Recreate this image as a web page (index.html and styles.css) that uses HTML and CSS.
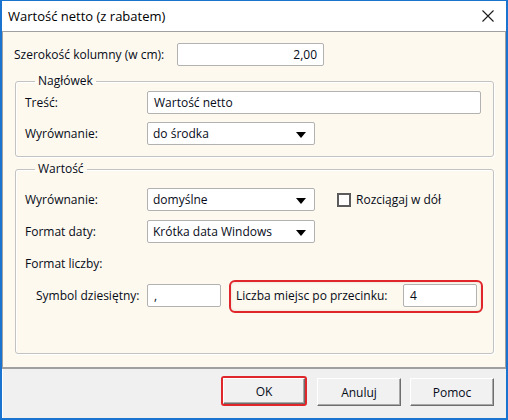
FILE: index.html
```html
<!DOCTYPE html>
<html lang="pl">
<head>
<meta charset="utf-8">
<title>Wartość netto (z rabatem)</title>
<link rel="stylesheet" href="styles.css">
</head>
<body>
<div class="window">
  <div class="titlebar">
    <span class="title">Wartość netto (z rabatem)</span>
    <span class="close"><svg width="12" height="12" viewBox="0 0 12 12"><path d="M0.5 0.5 L11.5 11.5 M11.5 0.5 L0.5 11.5" stroke="#1a1a1a" stroke-width="1.1" fill="none"/></svg></span>
  </div>
  <div class="panel">
    <div class="row top-row">
      <span class="label w-top">Szerokość kolumny (w cm):</span>
      <span class="field num">2,00</span>
    </div>
    <fieldset class="group g1">
      <legend>Nagłówek</legend>
      <div class="row">
        <span class="label w-lab">Treść:</span>
        <span class="field wide">Wartość netto</span>
      </div>
      <div class="row">
        <span class="label w-lab">Wyrównanie:</span>
        <span class="field select">do środka<i class="arrow"></i></span>
      </div>
    </fieldset>
    <fieldset class="group g2">
      <legend>Wartość</legend>
      <div class="row">
        <span class="label w-lab">Wyrównanie:</span>
        <span class="field select">domyślne<i class="arrow"></i></span>
        <span class="check"><i class="box"></i>Rozciągaj w dół</span>
      </div>
      <div class="row">
        <span class="label w-lab">Format daty:</span>
        <span class="field select">Krótka data Windows<i class="arrow"></i></span>
      </div>
      <div class="row">
        <span class="label">Format liczby:</span>
      </div>
      <div class="row sub">
        <span class="label w-sym">Symbol dziesiętny:</span>
        <span class="field small">,</span>
        <div class="highlight">
          <span class="label w-dec">Liczba miejsc po przecinku:</span>
          <span class="field small">4</span>
        </div>
      </div>
    </fieldset>
  </div>
  <div class="buttons">
    <div class="ring"><button class="btn">OK</button></div>
    <button class="btn">Anuluj</button>
    <button class="btn">Pomoc</button>
  </div>
</div>
</body>
</html>
```
FILE: styles.css
```css
* { box-sizing: border-box; }
html, body { margin: 0; padding: 0; background: #fff; }
body {
  width: 508px;
  height: 420px;
  font-family: "Open Sans", "Noto Sans", sans-serif;
  font-size: 12px;
  color: #060b18;
  overflow: hidden;
}
.window {
  width: 508px;
  height: 420px;
  border-left: 2px solid #1a73cf;
  border-right: 2px solid #1a73cf;
  border-bottom: 2px solid #1a73cf;
  border-top: 1px solid #1a73cf;
  display: flex;
  flex-direction: column;
  background: #f0f0f0;
}
.titlebar {
  height: 30px;
  background: #fff;
  display: flex;
  align-items: center;
  justify-content: space-between;
  padding: 0 12px 0 6px;
  flex: none;
}
.title { font-size: 13px; color: #000; margin-top: -1px; }
.close { display: flex; width: 12px; height: 12px; }
.panel {
  height: 338px;
  flex: none;
  background: #fdf9ee;
  border: 1px solid #a0a0a0;
  border-bottom: 2px solid #a0a0a0;
  padding: 11px 11px 0 11px;
}
.row {
  display: flex;
  align-items: center;
  height: 23px;
}
.label { white-space: nowrap; flex: none; }
.w-top { width: 163px; }
.w-lab { width: 122px; }
.w-sym { width: 111px; }
.w-dec { width: 167px; }
.field {
  height: 23px;
  background: #fff;
  border: 1px solid #b2b2b2;
  border-radius: 2px;
  display: flex;
  align-items: center;
  padding: 0 6px;
  white-space: nowrap;
  flex: none;
}
.num { width: 147px; justify-content: flex-end; }
.wide { width: 334px; }
.select { width: 168px; position: relative; padding-left: 5px; }
.small { width: 74px; }
.arrow {
  position: absolute;
  right: 8px;
  top: 9px;
  width: 0;
  height: 0;
  border-left: 5px solid transparent;
  border-right: 5px solid transparent;
  border-top: 6px solid #000;
}
.group {
  margin: 0;
  margin-left: 1px;
  width: 479px;
  border: 1px solid #c2c2c2;
  border-radius: 3px;
  box-shadow: inset 1px 1px 0 #fff, 1px 1px 0 #fff;
  padding: 0 0 0 9px;
}
.group legend {
  padding: 0 3px;
  margin-left: 10px;
  line-height: 14px;
  height: 14px;
}
.g1 { margin-top: 8px; padding-top: 3px; padding-bottom: 11px; }
.g1 .row + .row { margin-top: 8px; }
.g2 { margin-top: 5px; padding-top: 12px; height: 192px; }
.g2 .row + .row { margin-top: 9px; }
.check {
  display: flex;
  align-items: center;
  margin-left: 22px;
  white-space: nowrap;
}
.box {
  width: 14px;
  height: 14px;
  border: 2px solid #5c5c5c;
  background: #fff;
  margin-right: 5px;
}
.sub { padding-left: 11px; }
.highlight {
  display: flex;
  align-items: center;
  margin-left: 8px;
  margin-top: 2px;
  height: 33px;
  width: 254px;
  border: 2px solid #e0262a;
  border-radius: 6px;
  padding: 0 3px 2px 5px;
  box-shadow: inset 0 0 3px rgba(0,0,0,0.12);
}
.buttons {
  flex: 1;
  display: flex;
  justify-content: flex-end;
  align-items: flex-start;
  padding: 9px 12px 0 0;
  gap: 9px;
  border-left: 1px solid #fff;
}
.btn {
  width: 84px;
  height: 28px;
  font: inherit;
  color: #060b18;
  background: #f1f1f1;
  border: 1px solid;
  border-color: #fff #6e6e6e #6e6e6e #fff;
  box-shadow: inset -1px -1px 0 #a8a8a8;
  padding: 0;
  flex: none;
}
.ring {
  border: 2px solid #e0262a;
  border-radius: 3px;
  margin: -2px 1px -2px -2px;
  display: flex;
}
.ring .btn { width: 82px; height: 26px; }
```
